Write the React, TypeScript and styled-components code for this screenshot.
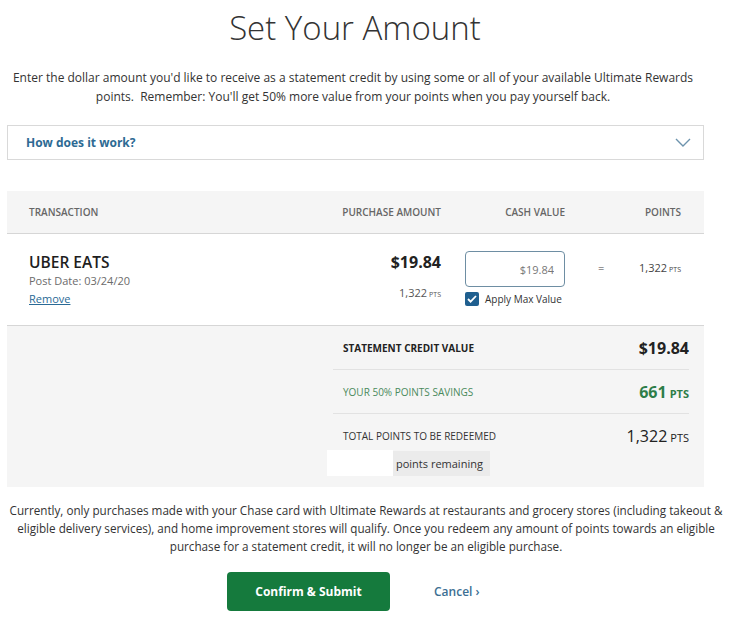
import styled, { createGlobalStyle } from "styled-components";

const GlobalStyle = createGlobalStyle`
  html, body {
    margin: 0;
    padding: 0;
    background: #ffffff;
  }
  body {
    font-family: "Open Sans", "Liberation Sans", Arial, sans-serif;
    color: #333333;
  }
  * {
    box-sizing: border-box;
  }
`;

const Page = styled.div`
  width: 732px;
  padding: 0 0 20px;
`;

const Title = styled.h1`
  width: 710px;
  margin: 0;
  padding-top: 6px;
  text-align: center;
  font-size: 33px;
  font-weight: 300;
  line-height: 44px;
  color: #333333;
`;

const Intro = styled.p`
  width: 706px;
  margin: 18px 0 0;
  padding: 0 10px;
  text-align: center;
  font-size: 12px;
  line-height: 19px;
  color: #333333;
`;

const Accordion = styled.button`
  display: flex;
  align-items: center;
  justify-content: space-between;
  width: 697px;
  height: 35px;
  margin: 19px 0 0 7px;
  padding: 0 12px 0 18px;
  background: #ffffff;
  border: 1px solid #d9d9d9;
  font-family: inherit;
  font-size: 12px;
  font-weight: 700;
  color: #2d6a93;
  cursor: pointer;
`;

const Table = styled.section`
  width: 697px;
  margin: 31px 0 0 7px;
`;

const Row = styled.div`
  display: grid;
  grid-template-columns: 1fr 130px 100px 116px;
  padding: 0 23px 0 22px;
`;

const HeaderRow = styled(Row)`
  height: 43px;
  align-items: center;
  background: #f5f5f5;
  border-bottom: 1px solid #d6d6d6;
`;

const HeadCell = styled.div<{ $align?: "left" | "right" }>`
  font-size: 10px;
  font-weight: 600;
  color: #666666;
  white-space: nowrap;
  text-align: ${(p) => p.$align ?? "left"};
`;

const PurchaseHead = styled(HeadCell)`
  text-align: right;
  padding-right: 24px;
`;

const ItemRow = styled(Row)`
  height: 92px;
  padding-top: 17px;
  border-bottom: 1px solid #d6d6d6;
`;

const Merchant = styled.div`
  display: flex;
  flex-direction: column;
`;

const MerchantName = styled.div`
  font-size: 15.5px;
  font-weight: 600;
  line-height: 22px;
  color: #1e1e1e;
`;

const PostDate = styled.div`
  font-size: 11px;
  line-height: 15px;
  color: #6b6b6b;
`;

const RemoveLink = styled.a`
  margin-top: 3px;
  font-size: 11px;
  line-height: 15px;
  font-weight: 400;
  color: #2a6a96;
  text-decoration: underline;
  cursor: pointer;
  align-self: flex-start;
`;

const Purchase = styled.div`
  display: flex;
  flex-direction: column;
  align-items: flex-end;
  padding-right: 24px;
`;

const Amount = styled.div`
  font-size: 16px;
  font-weight: 700;
  line-height: 22px;
  color: #222222;
`;

const SmallPts = styled.div`
  margin-top: 12px;
  font-size: 11px;
  color: #555555;
  white-space: nowrap;
`;

const Pts = styled.span`
  font-size: 7px;
  margin-left: 2px;
`;

const CashCell = styled.div`
  display: flex;
  flex-direction: column;
`;

const CashInput = styled.input`
  width: 100px;
  height: 36px;
  padding: 0 10px;
  border: 1px solid #6e8ea3;
  border-radius: 4px;
  text-align: right;
  font-family: inherit;
  font-size: 11px;
  color: #777777;
  background: #ffffff;
`;

const CheckLabel = styled.label`
  display: flex;
  align-items: center;
  gap: 6px;
  margin-top: 5px;
  font-size: 10px;
  color: #333333;
  white-space: nowrap;
`;

const CheckBox = styled.span`
  display: inline-flex;
  align-items: center;
  justify-content: center;
  width: 14px;
  height: 14px;
  border-radius: 2px;
  background: #1f5f8f;
`;

const PointsCell = styled.div`
  display: flex;
  justify-content: space-between;
  align-items: flex-start;
  padding: 9px 0 0 33px;
  font-size: 11px;
  color: #444444;
`;

const Summary = styled.div`
  display: flex;
  flex-direction: column;
  height: 161px;
  padding: 0 15px 0 320px;
  background: #f5f5f5;
`;

const SummaryLine = styled.div<{ $last?: boolean }>`
  display: flex;
  align-items: center;
  justify-content: space-between;
  margin-left: 6px;
  height: ${(p) => (p.$last ? "32px" : "44px")};
  padding: ${(p) => (p.$last ? "12px 0 0 10px" : "0 0 0 10px")};
  border-bottom: ${(p) => (p.$last ? "none" : "1px solid #e2e2e2")};
`;

const SummaryLabel = styled.div<{ $tone?: "bold" | "green" | "plain" }>`
  font-size: 10px;
  font-weight: ${(p) => (p.$tone === "bold" ? 700 : 400)};
  color: ${(p) => (p.$tone === "green" ? "#4a8a5c" : p.$tone === "bold" ? "#222222" : "#333333")};
  white-space: nowrap;
`;

const SummaryValue = styled.div<{ $tone?: "bold" | "green" | "plain" }>`
  font-size: 16px;
  font-weight: ${(p) => (p.$tone === "plain" ? 400 : 700)};
  color: ${(p) => (p.$tone === "green" ? "#2d7d48" : "#222222")};
`;

const ValuePts = styled.span<{ $bold?: boolean }>`
  font-size: 11px;
  font-weight: ${(p) => (p.$bold ? 700 : 400)};
  margin-left: 3px;
`;

const Remaining = styled.div`
  display: flex;
  align-items: center;
  margin-top: 4px;
`;

const Redacted = styled.div`
  width: 66px;
  height: 26px;
  background: #ffffff;
`;

const RemainingText = styled.div`
  height: 25px;
  width: 97px;
  padding: 0 0 0 3px;
  display: flex;
  align-items: center;
  background: #ebebeb;
  font-size: 11px;
  color: #333333;
`;

const Disclaimer = styled.p`
  margin: 14px 0 0;
  padding: 0;
  text-align: center;
  font-size: 11.7px;
  line-height: 18px;
  color: #333333;
`;

const Actions = styled.div`
  display: flex;
  align-items: center;
  margin-top: 17px;
  padding-left: 227px;
  gap: 44px;
`;

const PrimaryButton = styled.button`
  width: 163px;
  height: 39px;
  border: none;
  border-radius: 4px;
  background: #157a3d;
  color: #ffffff;
  font-family: inherit;
  font-size: 12px;
  font-weight: 700;
  cursor: pointer;
`;

const CancelLink = styled.a`
  font-size: 12px;
  font-weight: 600;
  color: #3c6f93;
  cursor: pointer;
`;

const Chevron = () => (
  <svg width="16" height="10" viewBox="0 0 16 10" fill="none">
    <path d="M1 1l7 7 7-7" stroke="#6d93ad" strokeWidth="1.4" />
  </svg>
);

const Check = () => (
  <svg width="10" height="8" viewBox="0 0 10 8" fill="none">
    <path d="M1 4l2.6 2.6L9 1" stroke="#ffffff" strokeWidth="1.8" />
  </svg>
);

export default function App() {
  return (
    <Page>
      <GlobalStyle />
      <Title>Set Your Amount</Title>
      <Intro>
        Enter the dollar amount you'd like to receive as a statement credit by using some or all of your
        available Ultimate Rewards points.&nbsp; Remember: You'll get 50% more value from your points when you
        pay yourself back.
      </Intro>

      <Accordion>
        How does it work?
        <Chevron />
      </Accordion>

      <Table>
        <HeaderRow>
          <HeadCell>TRANSACTION</HeadCell>
          <PurchaseHead>PURCHASE AMOUNT</PurchaseHead>
          <HeadCell $align="right">CASH VALUE</HeadCell>
          <HeadCell $align="right">POINTS</HeadCell>
        </HeaderRow>

        <ItemRow>
          <Merchant>
            <MerchantName>UBER EATS</MerchantName>
            <PostDate>Post Date: 03/24/20</PostDate>
            <RemoveLink>Remove</RemoveLink>
          </Merchant>
          <Purchase>
            <Amount>$19.84</Amount>
            <SmallPts>
              1,322<Pts>PTS</Pts>
            </SmallPts>
          </Purchase>
          <CashCell>
            <CashInput defaultValue="$19.84" />
            <CheckLabel>
              <CheckBox>
                <Check />
              </CheckBox>
              Apply Max Value
            </CheckLabel>
          </CashCell>
          <PointsCell>
            <span>=</span>
            <span>
              1,322<Pts>PTS</Pts>
            </span>
          </PointsCell>
        </ItemRow>

        <Summary>
          <SummaryLine>
            <SummaryLabel $tone="bold">STATEMENT CREDIT VALUE</SummaryLabel>
            <SummaryValue $tone="bold">$19.84</SummaryValue>
          </SummaryLine>
          <SummaryLine>
            <SummaryLabel $tone="green">YOUR 50% POINTS SAVINGS</SummaryLabel>
            <SummaryValue $tone="green">
              661<ValuePts $bold>PTS</ValuePts>
            </SummaryValue>
          </SummaryLine>
          <SummaryLine $last>
            <SummaryLabel $tone="plain">TOTAL POINTS TO BE REDEEMED</SummaryLabel>
            <SummaryValue $tone="plain">
              1,322<ValuePts>PTS</ValuePts>
            </SummaryValue>
          </SummaryLine>
          <Remaining>
            <Redacted />
            <RemainingText>points remaining</RemainingText>
          </Remaining>
        </Summary>
      </Table>

      <Disclaimer>
        Currently, only purchases made with your Chase card with Ultimate Rewards at restaurants and grocery
        stores (including takeout &amp; eligible delivery services), and home improvement stores will qualify.
        Once you redeem any amount of points towards an eligible purchase for a statement credit, it will no
        longer be an eligible purchase.
      </Disclaimer>

      <Actions>
        <PrimaryButton>Confirm &amp; Submit</PrimaryButton>
        <CancelLink>Cancel ›</CancelLink>
      </Actions>
    </Page>
  );
}
